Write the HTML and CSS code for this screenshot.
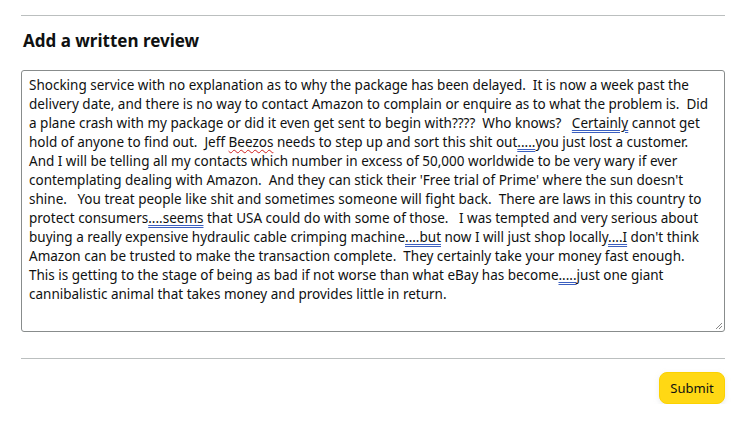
FILE: index.html
```html
<!DOCTYPE html>
<html>
<head>
<meta charset="utf-8">
<link rel="stylesheet" href="styles.css">
</head>
<body>
<div class="page">
  <hr class="rule top">
  <h2 class="title">Add a written review</h2>
  <div class="box">
    <div class="text">
      <div class="line">Shocking service with no explanation as to why the package has been delayed.  It is now a week past the</div>
      <div class="line">delivery date, and there is no way to contact Amazon to complain or enquire as to what the problem is.  Did</div>
      <div class="line">a plane crash with my package or did it even get sent to begin with????  Who knows?   <span class="g">Certainly</span> cannot get</div>
      <div class="line">hold of anyone to find out.  Jeff <span class="s">Beezos</span> needs to step up and sort this shit out<span class="g">.....</span>you just lost a customer.</div>
      <div class="line">And I will be telling all my contacts which number in excess of 50,000 worldwide to be very wary if ever</div>
      <div class="line">contemplating dealing with Amazon.  And they can stick their 'Free trial of Prime' where the sun doesn't</div>
      <div class="line">shine.   You treat people like shit and sometimes someone will fight back.  There are laws in this country to</div>
      <div class="line">protect consumers<span class="g">....seems</span> that USA could do with some of those.   I was tempted and very serious about</div>
      <div class="line">buying a really expensive hydraulic cable crimping machine<span class="g">....but</span> now I will just shop locally<span class="g">....I</span> don't think</div>
      <div class="line">Amazon can be trusted to make the transaction complete.  They certainly take your money fast enough.</div>
      <div class="line">This is getting to the stage of being as bad if not worse than what eBay has become<span class="g">.....</span>just one giant</div>
      <div class="line">cannibalistic animal that takes money and provides little in return.</div>
    </div>
    <svg class="grip" width="9" height="9" viewBox="0 0 9 9"><path d="M8 2L2 8M8 5L5 8" stroke="#888" stroke-width="1"/></svg>
  </div>
  <hr class="rule bottom">
  <div class="actions">
    <button class="submit">Submit</button>
  </div>
</div>
</body>
</html>
```
FILE: styles.css
```css
html, body { margin: 0; padding: 0; background: #fff; }
body { font-family: "Noto Sans", "Open Sans", sans-serif; color: #0f1111; }
.page { padding: 15px 22px 0 21px; }
.rule { border: 0; border-top: 1px solid #bbbfbf; margin: 0; }
.title { font-size: 17px; font-weight: 700; margin: 13px 0 0 2px; line-height: 24px; }
.box { position: relative; margin-top: 17px; height: 262px; border: 1px solid #888c8c; border-radius: 3px; padding: 5px 7px; box-sizing: border-box; }
.text { font-size: 13.5px; line-height: 19px; color: #0f1111; }
.line { white-space: pre; }
.g { text-decoration: underline double #3b5fc0; text-underline-offset: 2px; text-decoration-thickness: 1px; }
.s { text-decoration: underline wavy #d02020; text-underline-offset: 2px; text-decoration-thickness: 1px; }
.grip { position: absolute; right: 1px; bottom: 1px; }
.rule.bottom { margin-top: 26px; }
.actions { display: flex; justify-content: flex-end; margin-top: 13px; }
.submit { background: #ffd814; border: 1px solid #fcd200; border-radius: 8px; font-family: "Noto Sans", sans-serif; font-size: 13px; color: #0f1111; padding: 0 8px; height: 32px; width: 66px; box-shadow: 0 2px 5px rgba(213,217,217,.5); }
```
